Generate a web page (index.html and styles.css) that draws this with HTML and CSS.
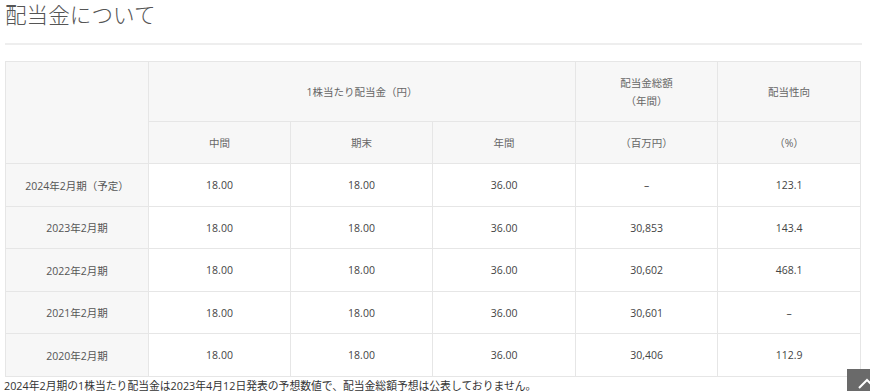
FILE: index.html
```html
<!DOCTYPE html>
<html lang="ja">
<head>
<meta charset="utf-8">
<link rel="stylesheet" href="styles.css">
</head>
<body>
<div class="wrap">
  <h2 class="title">配当金について</h2>
  <table class="div-table">
    <colgroup>
      <col class="c1"><col class="c2"><col class="c2"><col class="c1"><col class="c2"><col class="c1">
    </colgroup>
    <thead>
      <tr class="h1">
        <th rowspan="2"></th>
        <th colspan="3">1株当たり配当金（円）</th>
        <th>配当金総額<br>（年間）</th>
        <th>配当性向</th>
      </tr>
      <tr class="h2">
        <th>中間</th>
        <th>期末</th>
        <th>年間</th>
        <th>（百万円）</th>
        <th>（%）</th>
      </tr>
    </thead>
    <tbody>
      <tr class="r43"><th>2024年2月期（予定）</th><td>18.00</td><td>18.00</td><td>36.00</td><td>–</td><td>123.1</td></tr>
      <tr class="r42"><th>2023年2月期</th><td>18.00</td><td>18.00</td><td>36.00</td><td>30,853</td><td>143.4</td></tr>
      <tr class="r43"><th>2022年2月期</th><td>18.00</td><td>18.00</td><td>36.00</td><td>30,602</td><td>468.1</td></tr>
      <tr class="r42"><th>2021年2月期</th><td>18.00</td><td>18.00</td><td>36.00</td><td>30,601</td><td>–</td></tr>
      <tr class="r43"><th>2020年2月期</th><td>18.00</td><td>18.00</td><td>36.00</td><td>30,406</td><td>112.9</td></tr>
    </tbody>
  </table>
  <p class="note">2024年2月期の1株当たり配当金は2023年4月12日発表の予想数値で、配当金総額予想は公表しておりません。</p>
</div>
<a class="pagetop" href="#" aria-label="ページトップ">
  <svg width="20" height="12" viewBox="0 0 20 12"><path d="M2 11 L10 3 L18 11" fill="none" stroke="#fff" stroke-width="2"/></svg>
</a>
</body>
</html>
```

FILE: styles.css
```css
html, body {
  margin: 0;
  padding: 0;
  background: #fff;
  overflow: hidden;
}
body {
  font-family: "Open Sans", "Noto Sans CJK JP", sans-serif;
  color: #444;
}
.wrap {
  margin-left: 5px;
  width: 857px;
}
.title {
  margin: 1px 0 0;
  font-family: "Noto Sans CJK JP", sans-serif;
  font-weight: 300;
  font-size: 21.6px;
  line-height: 26px;
  color: #555;
  padding-bottom: 16px;
  border-bottom: 2px solid #eee;
}
.div-table {
  margin-top: 16px;
  width: 855px;
  border-collapse: collapse;
  table-layout: fixed;
  font-size: 10.5px;
}
.c1 { width: 143px; }
.c2 { width: 142px; }
.div-table th,
.div-table td {
  border: 1px solid #e6e6e6;
  text-align: center;
  vertical-align: middle;
  padding: 0;
  font-weight: 400;
}
.div-table th {
  background: #f7f7f7;
  color: #555;
}
.div-table td {
  background: #fff;
  color: #444;
}
.div-table thead th {
  color: #666;
  line-height: 18px;
}
.h1 { height: 60px; }
.h2 { height: 42px; }
.r43 { height: 43px; }
.r42 { height: 42px; }
.note {
  margin: 0 0 0 -1px;
  padding-top: 2px;
  font-size: 10.8px;
  line-height: 14px;
  color: #333;
}
.pagetop {
  position: fixed;
  left: 847px;
  top: 369px;
  width: 40px;
  height: 40px;
  background: #6a6a6a;
  display: flex;
  justify-content: center;
  padding-top: 8px;
  box-sizing: border-box;
}
```
